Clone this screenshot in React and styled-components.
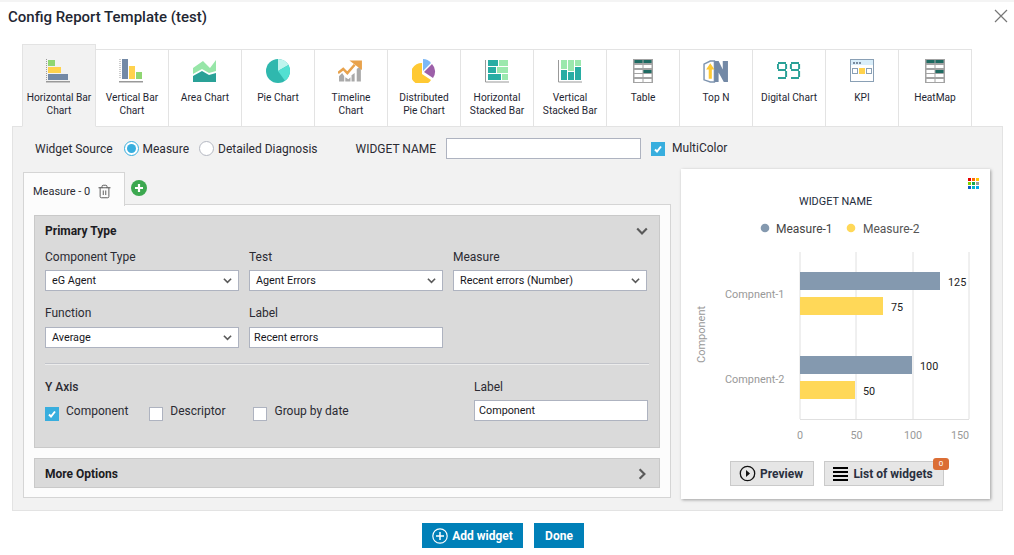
import React from 'react'
import styled, { createGlobalStyle } from 'styled-components'
import { Trash2 } from 'lucide-react'

const Global = createGlobalStyle`
  html, body { margin: 0; padding: 0; background: #fff; }
  body { font-family: Roboto, "Liberation Sans", sans-serif; color: #2b2b33; }
  * { box-sizing: border-box; }
`

const Page = styled.div`
  width: 1014px;
  height: 555px;
  overflow: hidden;
  border-top: 2px solid #f4f4f4;
`
const Head = styled.div`
  display: flex;
  justify-content: space-between;
  align-items: flex-start;
  height: 42px;
  padding: 6px 5px 0 8px;
`
const Title = styled.h1`
  margin: 0;
  font-size: 15px;
  line-height: 18px;
  font-weight: 500;
  color: #1f2733;
`
const TabStrip = styled.div`
  display: flex;
  align-items: flex-end;
  height: 83px;
  margin-left: 22px;
  position: relative;
  z-index: 1;
`
const ChartTab = styled.div`
  width: ${p => (p.$first ? 74 : 73)}px;
  height: ${p => (p.$active ? 83 : 78)}px;
  flex: none;
  display: flex;
  flex-direction: column;
  align-items: center;
  background: ${p => (p.$active ? '#f2f2f2' : '#fff')};
  border: 1px solid #e3e3e3;
  border-left-width: ${p => (p.$first ? 1 : 0)}px;
  border-bottom-color: ${p => (p.$active ? '#f2f2f2' : '#e3e3e3')};
  padding-top: ${p => (p.$active ? 12 : 7)}px;
`
const IconSlot = styled.div`
  width: 30px;
  height: 28px;
  display: flex;
  align-items: center;
  justify-content: center;
`
const TabName = styled.div`
  margin-top: 6px;
  font-size: 10.2px;
  line-height: 13px;
  text-align: center;
  color: #1f2733;
  white-space: pre-line;
`
const Panel = styled.div`
  margin: -1px 11px 0 12px;
  height: 385px;
  background: #f2f2f2;
  border: 1px solid #e3e3e3;
  padding: 0 10px;
`
const SourceRow = styled.div`
  display: flex;
  align-items: center;
  height: 43px;
  padding-left: 12px;
  font-size: 12px;
`
const RadioWrap = styled.label`
  display: flex;
  align-items: center;
  gap: 4px;
  margin-left: ${p => p.$gap}px;
`
const RadioDot = styled.span`
  width: 15px;
  height: 15px;
  border-radius: 50%;
  background: #fff;
  border: 1px solid ${p => (p.$on ? '#38aede' : '#b4b8c2')};
  display: flex;
  align-items: center;
  justify-content: center;
  &::after {
    content: '';
    display: ${p => (p.$on ? 'block' : 'none')};
    width: 9px;
    height: 9px;
    border-radius: 50%;
    background: #38aede;
  }
`
const NameLabel = styled.span`
  margin-left: 38px;
`
const NameInput = styled.div`
  width: 195px;
  height: 21px;
  margin-left: 10px;
  background: #fff;
  border: 1px solid #aeb3c0;
`
const CheckBox = styled.span`
  width: 14px;
  height: 14px;
  flex: none;
  display: flex;
  align-items: center;
  justify-content: center;
  background: ${p => (p.$on ? '#38aede' : '#fff')};
  border: 1px solid ${p => (p.$on ? '#38aede' : '#aeb3c0')};
`
const CheckWrap = styled.label`
  display: flex;
  align-items: center;
  gap: ${p => p.$gap || 7}px;
  margin-left: ${p => p.$left || 0}px;
`
const CheckText = styled.span`
  position: relative;
  top: ${p => p.$top ?? -3}px;
`
const Body = styled.div`
  display: flex;
  align-items: flex-start;
  gap: 10px;
`
const Left = styled.div`
  width: 648px;
`
const TabsLine = styled.div`
  display: flex;
  align-items: center;
  height: 33px;
  margin-top: 1px;
`
const MeasureTab = styled.div`
  width: 102px;
  height: 34px;
  display: flex;
  align-items: center;
  gap: 7px;
  padding: 4px 0 0 9px;
  background: #fcfcfc;
  border: 1px solid #d5d5d5;
  border-bottom: none;
  font-size: 11px;
  position: relative;
  top: 1px;
  z-index: 1;
`
const AddCircle = styled.span`
  width: 16px;
  height: 16px;
  margin-left: 6px;
  border-radius: 50%;
  background: #3ca84f;
  display: flex;
  align-items: center;
  justify-content: center;
`
const Sheet = styled.div`
  height: 294px;
  background: #fcfcfc;
  border: 1px solid #d5d5d5;
  padding: 10px;
`
const Section = styled.div`
  background: #dadada;
  border: 1px solid #c9c9c9;
  height: ${p => p.$h}px;
  padding: 0 11px 0 10px;
  margin-bottom: 10px;
`
const SectionHead = styled.div`
  display: flex;
  justify-content: space-between;
  align-items: center;
  height: ${p => p.$h}px;
  margin-bottom: ${p => p.$mb || 0}px;
  font-size: 12px;
  font-weight: 700;
  color: #1c1c22;
`
const FieldRow = styled.div`
  display: grid;
  grid-template-columns: repeat(3, 194px);
  column-gap: 10px;
  margin-bottom: 15px;
`
const Field = styled.div`
  display: flex;
  flex-direction: column;
  gap: ${p => p.$gap || 5}px;
`
const FieldLabel = styled.div`
  font-size: 12px;
  line-height: 15px;
  color: #2b2b33;
`
const SelectBox = styled.div`
  height: 21px;
  display: flex;
  align-items: center;
  justify-content: space-between;
  padding: 0 6px;
  background: #fff;
  border: 1px solid #aeb3c0;
  font-size: 10.8px;
  color: #16161c;
`
const TextBox = styled(SelectBox)`
  padding: 0 4px;
`
const Rule = styled.div`
  height: 2px;
  width: 604px;
  margin-top: 15px;
  background: linear-gradient(#c2c4ca 50%, #ececec 50%);
`
const AxisRow = styled.div`
  display: flex;
  justify-content: space-between;
  width: 603px;
  margin-top: 15px;
`
const AxisChecks = styled.div`
  padding-top: 0;
`
const AxisTitle = styled.div`
  font-size: 12px;
  font-weight: 500;
  line-height: 15px;
  margin-bottom: 12px;
  color: #2b2b33;
`
const Checks = styled.div`
  display: flex;
  font-size: 12px;
`
const AxisLabel = styled(Field)`
  width: 174px;
`
const Card = styled.div`
  width: 309px;
  height: 330px;
  margin-top: -1px;
  background: #fff;
  box-shadow: 1px 1px 3px rgba(0, 0, 0, 0.35);
  padding: 8px 0 0;
`
const ChartSvg = styled.svg`
  display: block;
  font-family: Roboto, "Liberation Sans", sans-serif;
`
const ToolRow = styled.div`
  display: flex;
  justify-content: flex-start;
  gap: 10px;
  padding-left: 49px;
  margin-top: 4px;
`
const ToolButton = styled.div`
  height: 25px;
  width: ${p => p.$w}px;
  display: flex;
  align-items: center;
  justify-content: center;
  gap: ${p => p.$gap}px;
  padding-right: 2px;
  background: #e6e6e6;
  border: 1px solid #cacaca;
  font-size: 12px;
  font-weight: 700;
  color: #2a3040;
  position: relative;
`
const Badge = styled.span`
  position: absolute;
  right: -6px;
  top: -4px;
  width: 16px;
  height: 12px;
  border-radius: 3px;
  background: #db6e35;
  color: #fff;
  font-size: 8px;
  font-weight: 400;
  line-height: 12px;
  text-align: center;
`
const Footer = styled.div`
  display: flex;
  justify-content: center;
  gap: 11px;
  margin-top: 12px;
  padding-right: 8px;
`
const PrimaryButton = styled.div`
  height: 25px;
  width: ${p => p.$w}px;
  display: flex;
  align-items: center;
  justify-content: center;
  gap: 4px;
  background: #0080b8;
  color: #fff;
  font-size: 12px;
  font-weight: 700;
`

const HBarIcon = () => (
  <svg width="26" height="24" viewBox="0 0 26 24">
    <path d="M.5 0v21" stroke="#999" strokeDasharray="1 1" />
    <rect x="2" y="1" width="7" height="6" fill="#8fd672" />
    <rect x="2" y="8" width="13" height="6" fill="#ffd24d" />
    <rect x="2" y="15" width="20" height="6" fill="#7389a6" />
    <rect x="0" y="22" width="24" height="1.500" fill="#999" />
  </svg>
)
const VBarIcon = () => (
  <svg width="26" height="24" viewBox="0 0 26 24">
    <rect x="3" y="0" width="6" height="20" fill="#7389a6" />
    <rect x="10" y="7" width="6" height="13" fill="#ffd24d" />
    <rect x="17" y="13" width="6" height="7" fill="#8fd672" />
    <path d="M1 0v20" stroke="#999" strokeDasharray="1 1" />
    <rect x="0" y="22" width="24" height="1.500" fill="#999" />
  </svg>
)
const AreaIcon = () => (
  <svg width="24" height="22" viewBox="0 0 24 22">
    <path d="M0 8l10-7 7 7 6-8v11l-7 2-7-4-9 5z" fill="#97e6a8" />
    <path d="M0 16l9-5 7 4 7-2v9H0z" fill="#2aa197" />
  </svg>
)
const PieIcon = () => (
  <svg width="24" height="24" viewBox="0 0 24 24">
    <circle cx="12" cy="12" r="12" fill="#2fb8ae" />
    <path d="M12 0a12 12 0 0 1 10.500 6L12 12z" fill="#bff5ee" />
    <path d="M22.500 6A12 12 0 0 1 19 21.700L12 12z" fill="#52e0d2" />
  </svg>
)
const TimelineIcon = () => (
  <svg width="26" height="24" viewBox="0 0 25 22">
    <path d="M1 21v-5l3-3 2 3v5zM7 21v-4l3 2 2-2v4zM13 21v-6l3-2v8zM18 21V9l4-3v15z" fill="#a9a9a9" />
    <path d="M0 13l5-4 4 4 7-8" fill="none" stroke="#e8a24c" strokeWidth="2.400" />
    <path d="M12 1h12v9z" fill="#e8a24c" transform="translate(-1 0)" />
  </svg>
)
const DistPieIcon = () => (
  <svg width="24" height="24" viewBox="0 0 24 24">
    <path d="M10 4v11l9 6a11 11 0 1 1-9-17z" fill="#ffc933" />
    <path d="M11 0a10 10 0 0 1 8 4l-8 8z" fill="#7db8f5" />
    <path d="M20 5a11 11 0 0 1 1 14l-9-6z" fill="#9c5fa8" />
  </svg>
)
const HStackIcon = () => (
  <svg width="24" height="23" viewBox="0 0 24 23">
    <path d="M.5 0v22H24" fill="none" stroke="#999" />
    <rect x="3" y="0" width="10" height="6" fill="#27ada3" />
    <rect x="14" y="0" width="9" height="6" fill="#9be8ad" />
    <rect x="3" y="7" width="8" height="6" fill="#27ada3" />
    <rect x="12" y="7" width="11" height="6" fill="#9be8ad" />
    <rect x="3" y="14" width="13" height="6" fill="#27ada3" />
    <rect x="17" y="14" width="6" height="6" fill="#9be8ad" />
  </svg>
)
const VStackIcon = () => (
  <svg width="24" height="23" viewBox="0 0 24 23">
    <path d="M.5 0v22H24" fill="none" stroke="#999" />
    <rect x="3" y="0" width="6" height="9" fill="#9be8ad" />
    <rect x="3" y="10" width="6" height="10" fill="#27ada3" />
    <rect x="10" y="0" width="6" height="11" fill="#9be8ad" />
    <rect x="10" y="12" width="6" height="8" fill="#27ada3" />
    <rect x="17" y="0" width="6" height="6" fill="#9be8ad" />
    <rect x="17" y="7" width="6" height="13" fill="#27ada3" />
  </svg>
)
const TableIcon = () => (
  <svg width="20" height="24" viewBox="0 0 20 24">
    <rect width="20" height="24" fill="#a3a3a3" />
    {[1, 6, 11, 15, 20].map(y => (
      <g key={y}>
        <rect x="1.500" y={y} width="8" height="3" fill={y === 1 ? '#1f6b62' : '#fff'} />
        <rect x="10.500" y={y} width="8" height="3" fill={y === 1 || y === 11 ? '#1f6b62' : '#fff'} />
      </g>
    ))}
  </svg>
)
const TopNIcon = () => (
  <svg width="26" height="23" viewBox="0 0 25 22">
    <path d="M1 4l6-3h4v20H7l-6-2z" fill="#fff" stroke="#7f95b0" strokeWidth="1.400" />
    <path d="M11 1h4l4 8V1h5v20h-4l-5-9v9h-4z" fill="#7389a6" />
    <path d="M7 3l4 6H8.500v9h-3V9H3z" fill="#ffc933" />
  </svg>
)
const DigitalIcon = () => {
  const nine = 'M1 1h8M0.900 2v5M9.100 2v5M1 8h8M9.100 9v6M1 16h8'
  return (
    <svg width="24" height="18" viewBox="0 0 24 18" fill="none" stroke="#2aa197" strokeWidth="2">
      <path d={nine} />
      <path d={nine} transform="translate(13 0)" />
    </svg>
  )
}
const KpiIcon = () => (
  <svg width="24" height="24" viewBox="0 0 24 24">
    <rect x=".5" y=".5" width="23" height="22" fill="#fff" stroke="#8aa0b5" />
    <rect x="1" y="1" width="22" height="5" fill="#d9eefa" />
    <path d="M3 3h2v2H3zM6 3h2v2H6zM9 3h2v2H9z" fill="#7a8ca0" />
    <rect x="2.500" y="9.500" width="5" height="5" fill="#fff" stroke="#8aa0b5" />
    <rect x="9" y="9" width="6" height="6" fill="#ffd24d" />
    <rect x="16.500" y="9.500" width="5" height="5" fill="#fff" stroke="#8aa0b5" />
  </svg>
)
const Caret = ({ dir = 'down', size = 10, color = '#5a5a5a' }) => (
  <svg width={size} height={size} viewBox="0 0 10 10" fill="none" stroke={color} strokeWidth="1.800">
    <path d={dir === 'down' ? 'M1 3l4 4 4-4' : 'M3 1l4 4-4 4'} />
  </svg>
)
const Tick = () => (
  <svg width="10" height="10" viewBox="0 0 10 10" fill="none" stroke="#fff" strokeWidth="2">
    <path d="M2 5.500l2 2 4-5" />
  </svg>
)
const ColorGrid = () => {
  const colours = ['#e60000', '#ff6a00', '#ffc400', '#7ed100', '#12a84b', '#9c9c9c', '#0a5cc7', '#00b4c8', '#00a8f0']
  return (
    <g>
      {colours.map((c, i) => (
        <rect key={c} x={287 + (i % 3) * 4} y={9 + Math.floor(i / 3) * 4} width="3" height="3" fill={c} />
      ))}
    </g>
  )
}

const tabs = [
  ['Horizontal Bar\nChart', HBarIcon],
  ['Vertical Bar\nChart', VBarIcon],
  ['Area Chart', AreaIcon],
  ['Pie Chart', PieIcon],
  ['Timeline\nChart', TimelineIcon],
  ['Distributed\nPie Chart', DistPieIcon],
  ['Horizontal\nStacked Bar', HStackIcon],
  ['Vertical\nStacked Bar', VStackIcon],
  ['Table', TableIcon],
  ['Top N', TopNIcon],
  ['Digital Chart', DigitalIcon],
  ['KPI', KpiIcon],
  ['HeatMap', TableIcon],
]

// card origin is 681,169 so everything below is page coords minus that
const BarChart = () => {
  const bars = [
    { y: 103, w: 140, v: 125, c: '#8499af' },
    { y: 128, w: 83, v: 75, c: '#ffd858' },
    { y: 187, w: 112, v: 100, c: '#8499af' },
    { y: 212, w: 55, v: 50, c: '#ffd858' },
  ]
  return (
    <ChartSvg width="309" height="280" viewBox="0 8 309 280">
      <ColorGrid />
      <text x="118" y="36" fontSize="10.900" fill="#222a3a">WIDGET NAME</text>
      <circle cx="84" cy="59" r="4.300" fill="#8499af" />
      <text x="95" y="64" fontSize="12" fill="#444">Measure-1</text>
      <circle cx="170" cy="59" r="4.300" fill="#ffd858" />
      <text x="182" y="64" fontSize="12" fill="#555">Measure-2</text>
      {[119, 175, 232, 288].map(x => (
        <line key={x} x1={x} x2={x} y1="83" y2="250" stroke="#e0e0e0" />
      ))}
      <line x1="119" x2="288" y1="250.500" y2="250.500" stroke="#e0e0e0" />
      {bars.map(b => (
        <g key={b.y}>
          <rect x="119" y={b.y} width={b.w} height="18" fill={b.c} />
          <text x={119 + b.w + 8} y={b.y + 14} fontSize="10.800" fill="#222">{b.v}</text>
        </g>
      ))}
      <text x="44" y="129" fontSize="10.900" fill="#999">Compnent-1</text>
      <text x="44" y="214" fontSize="10.900" fill="#999">Compnent-2</text>
      <text transform="translate(24 194) rotate(-90)" fontSize="11" fill="#999">Component</text>
      {[[119, '0'], [175.500, '50'], [232, '100'], [279, '150']].map(([x, t]) => (
        <text key={t} x={x} y="270" fontSize="10.800" fill="#999" textAnchor="middle">{t}</text>
      ))}
    </ChartSvg>
  )
}

const Select = ({ value }) => (
  <SelectBox>
    {value}
    <Caret size={9} />
  </SelectBox>
)

export default function App() {
  return (
    <Page>
      <Global />
      <Head>
        <Title>Config Report Template (test)</Title>
        <svg width="16" height="16" viewBox="0 0 16 16" fill="none" stroke="#777" strokeWidth="1.200">
          <path d="M2 2l12 12M14 2L2 14" />
        </svg>
      </Head>
      <TabStrip>
        {tabs.map(([name, Icon], i) => (
          <ChartTab key={name} $active={i === 0} $first={i === 0}>
            <IconSlot><Icon /></IconSlot>
            <TabName>{name}</TabName>
          </ChartTab>
        ))}
      </TabStrip>
      <Panel>
        <SourceRow>
          Widget Source
          <RadioWrap $gap={11}><RadioDot $on />Measure</RadioWrap>
          <RadioWrap $gap={10}><RadioDot />Detailed Diagnosis</RadioWrap>
          <NameLabel>WIDGET NAME</NameLabel>
          <NameInput />
          <CheckWrap $left={10} $gap={7}>
            <CheckBox $on><Tick /></CheckBox>
            <CheckText $top={-1}>MultiColor</CheckText>
          </CheckWrap>
        </SourceRow>
        <Body>
          <Left>
            <TabsLine>
              <MeasureTab>
                Measure - 0
                <Trash2 size={15} strokeWidth={1.500} color="#555" />
              </MeasureTab>
              <AddCircle>
                <svg width="10" height="10" viewBox="0 0 10 10" stroke="#fff" strokeWidth="2.200">
                  <path d="M5 1v8M1 5h8" />
                </svg>
              </AddCircle>
            </TabsLine>
            <Sheet>
              <Section $h={233}>
                <SectionHead $h={29} $mb={5}>
                  Primary Type
                  <Caret size={12} />
                </SectionHead>
                <FieldRow>
                  <Field><FieldLabel>Component Type</FieldLabel><Select value="eG Agent" /></Field>
                  <Field><FieldLabel>Test</FieldLabel><Select value="Agent Errors" /></Field>
                  <Field><FieldLabel>Measure</FieldLabel><Select value="Recent errors (Number)" /></Field>
                </FieldRow>
                <FieldRow>
                  <Field $gap={6}><FieldLabel>Function</FieldLabel><Select value="Average" /></Field>
                  <Field $gap={6}><FieldLabel>Label</FieldLabel><TextBox>Recent errors</TextBox></Field>
                </FieldRow>
                <Rule />
                <AxisRow>
                  <AxisChecks>
                    <AxisTitle>Y Axis</AxisTitle>
                    <Checks>
                      <CheckWrap $gap={7}><CheckBox $on><Tick /></CheckBox><CheckText>Component</CheckText></CheckWrap>
                      <CheckWrap $left={21}><CheckBox /><CheckText>Descriptor</CheckText></CheckWrap>
                      <CheckWrap $left={28}><CheckBox /><CheckText>Group by date</CheckText></CheckWrap>
                    </Checks>
                  </AxisChecks>
                  <AxisLabel>
                    <FieldLabel>Label</FieldLabel>
                    <TextBox>Component</TextBox>
                  </AxisLabel>
                </AxisRow>
              </Section>
              <Section $h={30}>
                <SectionHead $h={29}>
                  More Options
                  <Caret dir="right" size={12} />
                </SectionHead>
              </Section>
            </Sheet>
          </Left>
          <Card>
            <BarChart />
            <ToolRow>
              <ToolButton $w={84} $gap={4}>
                <svg width="17" height="17" viewBox="0 0 17 17">
                  <circle cx="8.500" cy="8.500" r="7.200" fill="none" stroke="#111" strokeWidth="1.300" />
                  <path d="M7 5l4 3.500L7 12z" fill="#111" />
                </svg>
                Preview
              </ToolButton>
              <ToolButton $w={120} $gap={5}>
                <svg width="15" height="14" viewBox="0 0 15 14" fill="#000">
                  <path d="M0 0h15v2H0zM0 4h15v2H0zM0 8h15v2H0zM0 12h15v2H0z" />
                </svg>
                List of widgets
                <Badge>0</Badge>
              </ToolButton>
            </ToolRow>
          </Card>
        </Body>
      </Panel>
      <Footer>
        <PrimaryButton $w={101}>
          <svg width="16" height="16" viewBox="0 0 16 16" fill="none" stroke="#fff" strokeWidth="1.200">
            <circle cx="8" cy="8" r="7.200" />
            <path d="M8 4v8M4 8h8" strokeWidth="1.500" />
          </svg>
          Add widget
        </PrimaryButton>
        <PrimaryButton $w={50}>Done</PrimaryButton>
      </Footer>
    </Page>
  )
}
